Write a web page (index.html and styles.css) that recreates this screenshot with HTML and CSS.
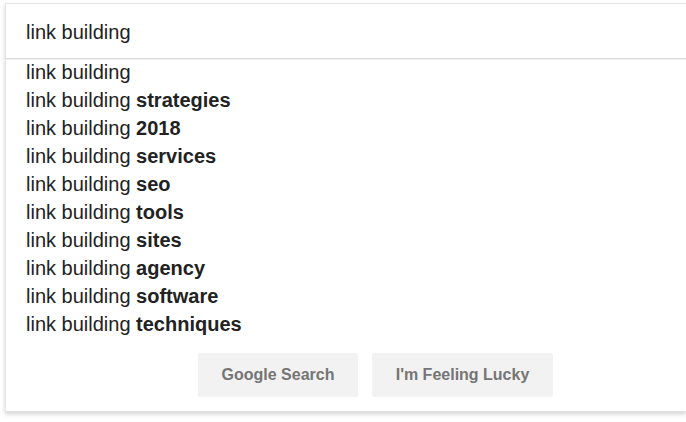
FILE: index.html
```html
<!DOCTYPE html>
<html lang="en">
<head>
    <meta charset="UTF-8">
    <meta name="viewport" content="width=device-width, initial-scale=1.0">
    <title>link building - Search</title>
    <link rel="stylesheet" href="styles.css">
</head>
<body>
    <div class="search-box">
        <div class="query">link building</div>
        <ul class="suggestions">
            <li>link building</li>
            <li>link building <b>strategies</b></li>
            <li>link building <b>2018</b></li>
            <li>link building <b>services</b></li>
            <li>link building <b>seo</b></li>
            <li>link building <b>tools</b></li>
            <li>link building <b>sites</b></li>
            <li>link building <b>agency</b></li>
            <li>link building <b>software</b></li>
            <li>link building <b>techniques</b></li>
        </ul>
        <div class="buttons">
            <button class="btn-search">Google Search</button>
            <button class="btn-lucky">I'm Feeling Lucky</button>
        </div>
    </div>
</body>
</html>
```

FILE: styles.css
```css
body {
    margin: 0;
    padding-bottom: 10px;
    background-color: #fff;
    font-family: "Liberation Sans", Arial, sans-serif;
}
.search-box {
    margin: 3px 0 0 5px;
    background-color: #fff;
    border-top: 1px solid #e6e6e6;
    border-left: 1px solid #e6e6e6;
    border-bottom: 1px solid #e0e0e0;
    box-shadow: 0 2px 4px rgba(0,0,0,0.18);
    padding-bottom: 14px;
}
.query {
    height: 54px;
    line-height: 56px;
    padding-left: 20px;
    font-size: 20px;
    color: #222;
    border-bottom: 1px solid #dcdcdc;
    box-shadow: 0 1px 1px rgba(0,0,0,0.05);
}
.suggestions {
    list-style: none;
    margin: 0;
    padding: 0;
}
.suggestions li {
    height: 28px;
    line-height: 27px;
    padding-left: 20px;
    font-size: 20px;
    color: #222;
}
.buttons {
    display: flex;
    gap: 14px;
    padding-left: 192px;
    margin-top: 14px;
}
.buttons button {
    height: 44px;
    background-color: #f2f2f2;
    border: 1px solid #f2f2f2;
    border-radius: 2px;
    font-family: "Liberation Sans", Arial, sans-serif;
    font-size: 16px;
    font-weight: bold;
    color: #757575;
    padding: 0;
}
.btn-search {
    width: 160px;
}
.btn-lucky {
    width: 181px;
}
```
